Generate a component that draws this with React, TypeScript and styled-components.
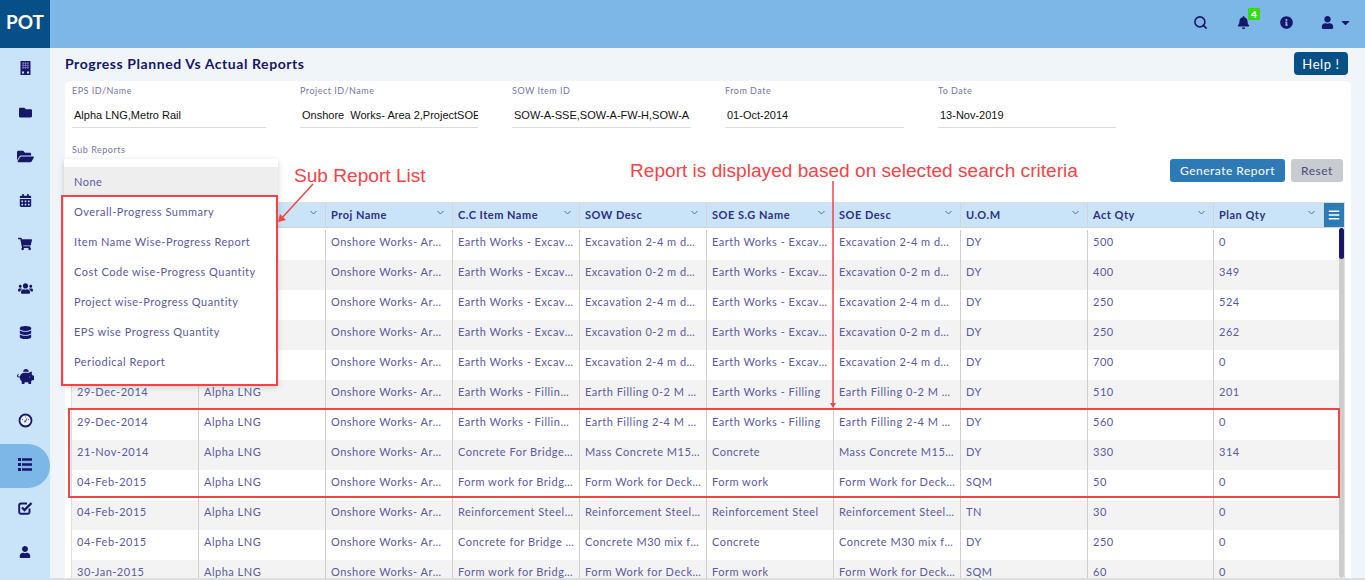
import styled, { createGlobalStyle } from 'styled-components'
import {
  FaFolder,
  FaFolderOpen,
  FaCalendarAlt,
  FaShoppingCart,
  FaUsers,
  FaDatabase,
  FaPiggyBank,
  FaUser,
  FaBell,
  FaInfoCircle,
  FaCaretDown,
  FaBars,
} from 'react-icons/fa'
import { Search } from 'lucide-react'

const NAVY = '#16166b'
const RED = '#f44347'

const GlobalStyle = createGlobalStyle`
  html, body { margin: 0; padding: 0; height: 580px; overflow: hidden; background: #f0f5f9; }
  * { box-sizing: border-box; }
`

const Shell = styled.div`
  position: relative;
  display: grid;
  grid-template-columns: 50px 1fr;
  grid-template-rows: 48px 1fr;
  width: 1365px;
  height: 580px;
  overflow: hidden;
  font-family: Lato, 'Open Sans', sans-serif;
`

const Logo = styled.div`
  background: #074f87;
  color: #fff;
  font-size: 19px;
  font-weight: 700;
  display: flex;
  align-items: center;
  justify-content: center;
  padding-bottom: 5px;
`

const TopBar = styled.header`
  background: #7cb7e8;
  display: flex;
  align-items: center;
  justify-content: flex-end;
  padding: 0 13px 4px 0;
  color: ${NAVY};
`

const TopIcon = styled.span<{ $gap?: number }>`
  position: relative;
  display: flex;
  align-items: center;
  margin-left: ${({ $gap }) => $gap ?? 0}px;
  font-size: 13px;
`

const Badge = styled.span`
  position: absolute;
  left: 11px;
  top: -8px;
  width: 12px;
  height: 12px;
  border-radius: 1px;
  background: #35dc14;
  color: #fff;
  font-size: 10px;
  font-weight: 900;
  line-height: 12px;
  text-align: center;
`

const Sidebar = styled.nav`
  background: #c9e4f9;
  display: flex;
  flex-direction: column;
  color: ${NAVY};
`

const NavItem = styled.div<{ $active?: boolean }>`
  flex: 0 0 44px;
  display: flex;
  align-items: center;
  justify-content: center;
  padding-bottom: 4px;
  border-radius: 0 22px 22px 0;
  background: ${({ $active }) => ($active ? '#7cb7e8' : 'transparent')};
`

const Main = styled.main`
  padding: 0 14px 0 15px;
  border-bottom: 2px solid #dcdfe2;
  display: flex;
  flex-direction: column;
  min-height: 0;
  overflow: hidden;
`

const TitleRow = styled.div`
  flex: 0 0 33px;
  display: flex;
  justify-content: space-between;
  align-items: flex-start;
  padding: 4px 3px 0 0;
`

const Title = styled.h1`
  margin: 0;
  font-size: 14px;
  line-height: 24px;
  font-weight: 700;
  letter-spacing: 0.57px;
  color: ${NAVY};
`

const HelpButton = styled.button`
  width: 54px;
  height: 23px;
  border: 0;
  border-radius: 4px;
  padding: 0;
  background: #074f87;
  color: #fff;
  font: 400 13px Lato, sans-serif;
  letter-spacing: 0.6px;
`

const Panel = styled.section`
  flex: 1;
  min-height: 0;
  background: #fff;
  border-radius: 5px 5px 0 0;
  padding: 3px 6px 0;
  display: flex;
  flex-direction: column;
`

const FieldRow = styled.div`
  display: flex;
  gap: 34px;
  padding-left: 1px;
`

const Field = styled.div<{ $width: number }>`
  position: relative;
  width: ${({ $width }) => $width}px;
`

const FieldLabel = styled.div`
  height: 13px;
  line-height: 13px;
  font-size: 9px;
  letter-spacing: 0.5px;
  color: #77779f;
`

const FieldValue = styled.div`
  margin-top: 5px;
  height: 26px;
  padding: 1px 0 0 2px;
  border-bottom: 1px solid #ddd;
  font: 11px/25px 'Liberation Sans', Arial, sans-serif;
  color: #111;
  white-space: pre;
  overflow: hidden;
`

const SubField = styled.div`
  position: relative;
  margin: 15px 0 0 1px;
  width: 194px;
`

const Dropdown = styled.ul`
  position: absolute;
  z-index: 5;
  left: -8px;
  top: 16px;
  width: 214px;
  margin: 0;
  padding: 8px 0;
  list-style: none;
  background: #fff;
  box-shadow: 0 2px 6px rgba(0, 0, 0, 0.18);
`

const DropdownItem = styled.li<{ $selected?: boolean }>`
  height: 30px;
  line-height: 30px;
  padding-left: 10px;
  font-size: 11px;
  letter-spacing: 0.5px;
  color: #5a5a9e;
  background: ${({ $selected }) => ($selected ? '#eeeeee' : 'transparent')};
`

const ActionRow = styled.div`
  display: flex;
  justify-content: flex-end;
  gap: 6px;
  margin-top: 3px;
  padding-right: 2px;
`

const ActionButton = styled.button<{ $primary?: boolean }>`
  width: ${({ $primary }) => ($primary ? 115 : 52)}px;
  height: 23px;
  border: 0;
  border-radius: 3px;
  padding: 0;
  background: ${({ $primary }) => ($primary ? '#2e7ab6' : '#c8ccd0')};
  color: ${({ $primary }) => ($primary ? '#fff' : '#4a4a80')};
  font: 400 12px Lato, sans-serif;
  letter-spacing: 0.5px;
`

const Table = styled.div`
  margin-top: 20px;
  flex: 1;
  min-height: 0;
  width: 1274px;
  border: 1px solid #ddd;
  border-bottom: 0;
  display: flex;
  flex-direction: column;
  overflow: hidden;
`

const HeaderRow = styled.div`
  flex: 0 0 25px;
  display: flex;
  background: #c9e4f9;
  border-bottom: 1px solid #d5d5d5;
`

const HeaderCell = styled.div<{ $width: number }>`
  position: relative;
  width: ${({ $width }) => $width}px;
  padding-left: 5px;
  border-right: 1px solid #d5d5d5;
  font-size: 11px;
  font-weight: 700;
  line-height: 24px;
  letter-spacing: 0.5px;
  color: #2f2f82;
  white-space: nowrap;
`

const Chevron = styled.svg`
  position: absolute;
  right: 8px;
  top: 7px;
  width: 7px;
  height: 5px;
`

const MenuButton = styled.div`
  width: 20px;
  background: #2e7ab6;
  color: #fff;
  display: flex;
  align-items: center;
  justify-content: center;
  font-size: 12px;
`

const TableBody = styled.div`
  flex: 1;
  min-height: 0;
  display: flex;
  overflow: hidden;
`

const Rows = styled.div`
  width: 1267px;
  padding-top: 2px;
`

const Row = styled.div<{ $shaded: boolean }>`
  display: flex;
  height: 30px;
  background: ${({ $shaded }) => ($shaded ? '#f3f3f3' : '#fff')};
`

const Cell = styled.div<{ $width: number }>`
  width: ${({ $width }) => $width}px;
  padding: 0 5px;
  border-right: 1px solid #cfcfcf;
  font-size: 11px;
  line-height: 24px;
  letter-spacing: 0.5px;
  color: #5a5a9e;
  white-space: nowrap;
  overflow: hidden;
  text-overflow: ellipsis;
  &:last-child { border-right: 0; }
`

const ScrollTrack = styled.div`
  width: 5px;
  background: #cdcdcd;
  border-radius: 3px;
`

const ScrollThumb = styled.div`
  height: 31px;
  background: ${NAVY};
  border-radius: 3px;
`

const Note = styled.div<{ $left: number; $top: number }>`
  position: absolute;
  z-index: 6;
  left: ${({ $left }) => $left}px;
  top: ${({ $top }) => $top}px;
  font: 19.1px/22px 'Liberation Sans', Arial, sans-serif;
  color: ${RED};
  white-space: nowrap;
`

const RedBox = styled.div<{ $left: number; $top: number; $width: number; $height: number }>`
  position: absolute;
  z-index: 6;
  left: ${({ $left }) => $left}px;
  top: ${({ $top }) => $top}px;
  width: ${({ $width }) => $width}px;
  height: ${({ $height }) => $height}px;
  border: 2px solid ${RED};
  pointer-events: none;
`

const ArrowLayer = styled.svg`
  position: absolute;
  z-index: 6;
  left: 0;
  top: 0;
  pointer-events: none;
`

function BuildingIcon() {
  return (
    <svg width="11" height="14" viewBox="0 0 11 14">
      <rect x="0.5" y="0" width="10" height="14" rx="0.5" fill={NAVY} />
      <path d="M2 2.2h7M2 4.4h7M2 6.6h7M3.2 1v7M5.5 1v7M7.8 1v7" stroke="#7d7db8" strokeWidth="0.8" />
      <path d="M2 10.5h2v2H2zM7 10.5h2v2H7z" fill="#c9e4f9" />
    </svg>
  )
}

function GaugeIcon() {
  return (
    <svg width="15" height="15" viewBox="0 0 15 15">
      <circle cx="7.5" cy="7.5" r="6" fill="#e9f3fb" stroke={NAVY} strokeWidth="1.8" />
      <path d="M4 6.5h1M10 6.5h1M7.5 3.5v1" stroke="#4a6fa8" strokeWidth="1" />
      <path d="M7.5 8.5 9 5.5" stroke="#d8434a" strokeWidth="1.2" />
      <circle cx="7" cy="8.5" r="1.1" fill="#2e7ab6" />
    </svg>
  )
}

function CheckSquareIcon() {
  return (
    <svg width="15" height="14" viewBox="0 0 15 14" fill="none" stroke={NAVY}>
      <path d="M11.5 7.5V11a1.8 1.8 0 0 1-1.8 1.8H3A1.8 1.8 0 0 1 1.2 11V4.300A1.800 1.800 0 0 1 3 2.500h6" strokeWidth="1.900" />
      <path d="M4 6.500 6.500 9 13.500 2" strokeWidth="2.300" />
    </svg>
  )
}

function ListIcon() {
  return (
    <svg width="14" height="13" viewBox="0 0 14 13" fill={NAVY}>
      <path d="M0 0h3v3H0zM4 0.300h10v2.400H4zM0 5h3v3H0zM4 5.300h10v2.400H4zM0 10h3v3H0zM4 10.300h10v2.400H4z" />
    </svg>
  )
}

const navIcons = [
  <BuildingIcon />,
  <FaFolder size={13} />,
  <FaFolderOpen size={17} />,
  <FaCalendarAlt size={13} />,
  <FaShoppingCart size={14} />,
  <FaUsers size={15} />,
  <FaDatabase size={13} />,
  <FaPiggyBank size={17} />,
  <GaugeIcon />,
  <ListIcon />,
  <CheckSquareIcon />,
  <FaUser size={12} />,
]

const headers = ['Prog Date', 'EPS Name', 'Proj Name', 'C.C Item Name', 'SOW Desc', 'SOE S.G Name', 'SOE Desc', 'U.O.M', 'Act Qty', 'Plan Qty']
const widths = [127, 127, 127, 127, 127, 127, 127, 127, 126, 125]

const PROJ = 'Onshore Works- Area 2 Project'
const EXC = 'Earth Works - Excavation Works'
const row = (date: string, cc: string, sow: string, soe: string, desc: string, uom: string, act: string, plan: string) =>
  [date, 'Alpha LNG', PROJ, cc, sow, soe, desc, uom, act, plan]

const rows = [
  row('29-Dec-2014', EXC, 'Excavation 2-4 m depth soil', EXC, 'Excavation 2-4 m depth soil', 'DY', '500', '0'),
  row('29-Dec-2014', EXC, 'Excavation 0-2 m depth soil', EXC, 'Excavation 0-2 m depth soil', 'DY', '400', '349'),
  row('29-Dec-2014', EXC, 'Excavation 2-4 m depth soil', EXC, 'Excavation 2-4 m depth soil', 'DY', '250', '524'),
  row('29-Dec-2014', EXC, 'Excavation 0-2 m depth soil', EXC, 'Excavation 0-2 m depth soil', 'DY', '250', '262'),
  row('29-Dec-2014', EXC, 'Excavation 2-4 m depth soil', EXC, 'Excavation 2-4 m depth soil', 'DY', '700', '0'),
  row('29-Dec-2014', 'Earth Works - Filling Work', 'Earth Filling 0-2 M depth', 'Earth Works - Filling', 'Earth Filling 0-2 M depth', 'DY', '510', '201'),
  row('29-Dec-2014', 'Earth Works - Filling Work', 'Earth Filling 2-4 M depth', 'Earth Works - Filling', 'Earth Filling 2-4 M depth', 'DY', '560', '0'),
  row('21-Nov-2014', 'Concrete For Bridge Deck Work', 'Mass Concrete M15 grade', 'Concrete', 'Mass Concrete M15 grade', 'DY', '330', '314'),
  row('04-Feb-2015', 'Form work for Bridge Deck', 'Form Work for Deck Slab', 'Form work', 'Form Work for Deck Slab', 'SQM', '50', '0'),
  row('04-Feb-2015', 'Reinforcement Steel for Deck', 'Reinforcement Steel for Deck', 'Reinforcement Steel', 'Reinforcement Steel for Deck', 'TN', '30', '0'),
  row('04-Feb-2015', 'Concrete for Bridge Deck Work', 'Concrete M30 mix for Deck', 'Concrete', 'Concrete M30 mix for Deck', 'DY', '250', '0'),
  row('30-Jan-2015', 'Form work for Bridge Deck', 'Form Work for Deck Slab', 'Form work', 'Form Work for Deck Slab', 'SQM', '60', '0'),
]

const subReports = [
  'None',
  'Overall-Progress Summary',
  'Item Name Wise-Progress Report',
  'Cost Code wise-Progress Quantity',
  'Project wise-Progress Quantity',
  'EPS wise Progress Quantity',
  'Periodical Report',
]

const fields = [
  { label: 'EPS ID/Name', value: 'Alpha LNG,Metro Rail', width: 194 },
  { label: 'Project ID/Name', value: 'Onshore  Works- Area 2,ProjectSOE', width: 178 },
  { label: 'SOW Item ID', value: 'SOW-A-SSE,SOW-A-FW-H,SOW-A', width: 179 },
  { label: 'From Date', value: '01-Oct-2014', width: 179 },
  { label: 'To Date', value: '13-Nov-2019', width: 178 },
]

export default function App() {
  return (
    <Shell>
      <GlobalStyle />
      <Logo>POT</Logo>
      <TopBar>
        <TopIcon><Search size={15} strokeWidth={2.6} /></TopIcon>
        <TopIcon $gap={29}>
          <FaBell />
          <Badge>4</Badge>
        </TopIcon>
        <TopIcon $gap={30}><FaInfoCircle /></TopIcon>
        <TopIcon $gap={28}><FaUser /></TopIcon>
        <TopIcon $gap={5}><FaCaretDown /></TopIcon>
      </TopBar>
      <Sidebar>
        {navIcons.map((icon, i) => (
          <NavItem key={i} $active={i === 9}>{icon}</NavItem>
        ))}
      </Sidebar>
      <Main>
        <TitleRow>
          <Title>Progress Planned Vs Actual Reports</Title>
          <HelpButton>Help !</HelpButton>
        </TitleRow>
        <Panel>
          <FieldRow>
            {fields.map((f) => (
              <Field key={f.label} $width={f.width}>
                <FieldLabel>{f.label}</FieldLabel>
                <FieldValue>{f.value}</FieldValue>
              </Field>
            ))}
          </FieldRow>
          <SubField>
            <FieldLabel>Sub Reports</FieldLabel>
            <Dropdown>
              {subReports.map((s, i) => (
                <DropdownItem key={s} $selected={i === 0}>{s}</DropdownItem>
              ))}
            </Dropdown>
          </SubField>
          <ActionRow>
            <ActionButton $primary>Generate Report</ActionButton>
            <ActionButton>Reset</ActionButton>
          </ActionRow>
          <Table>
            <HeaderRow>
              {headers.map((h, i) => (
                <HeaderCell key={h} $width={i === 9 ? 110 : widths[i]}>
                  {h}
                  <Chevron viewBox="0 0 7 5">
                    <path d="M0.5 1 3.5 4 6.5 1" fill="none" stroke="#4c6f9c" strokeWidth="1" />
                  </Chevron>
                </HeaderCell>
              ))}
              <MenuButton><FaBars /></MenuButton>
            </HeaderRow>
            <TableBody>
              <Rows>
                {rows.map((r, i) => (
                  <Row key={i} $shaded={i % 2 === 1}>
                    {r.map((c, j) => (
                      <Cell key={j} $width={widths[j]}>{c}</Cell>
                    ))}
                  </Row>
                ))}
              </Rows>
              <ScrollTrack><ScrollThumb /></ScrollTrack>
            </TableBody>
          </Table>
        </Panel>
      </Main>

      <RedBox $left={61} $top={195} $width={217} $height={191} />
      <RedBox $left={68} $top={408} $width={1272} $height={90} />
      <Note $left={294} $top={165}>Sub Report List</Note>
      <Note $left={630} $top={160}>Report is displayed based on selected search criteria</Note>
      <ArrowLayer width="1365" height="580">
        <path d="M313 184 281 219" stroke={RED} strokeWidth="1.5" fill="none" />
        <path d="M278 222 280 214 286 220Z" fill={RED} />
        <path d="M833 181V403" stroke={RED} strokeWidth="1.5" fill="none" />
        <path d="M830 403H836L833 408Z" fill={RED} />
      </ArrowLayer>
    </Shell>
  )
}
